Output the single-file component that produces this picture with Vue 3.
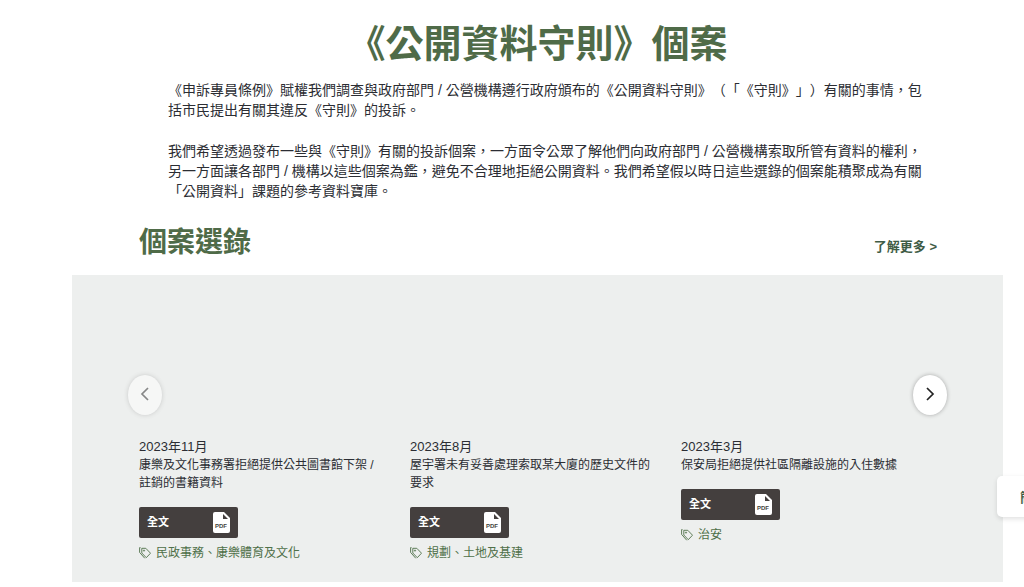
<script setup>
const cases = [
  { date: '2023年11月', title: '康樂及文化事務署拒絕提供公共圖書館下架 / 註銷的書籍資料', tag: '民政事務、康樂體育及文化' },
  { date: '2023年8月', title: '屋宇署未有妥善處理索取某大廈的歷史文件的要求', tag: '規劃、土地及基建' },
  { date: '2023年3月', title: '保安局拒絕提供社區隔離設施的入住數據', tag: '治安' }
]
</script>

<template>
  <main class="page">
    <h1>《公開資料守則》個案</h1>
    <div class="intro">
      <p>《申訴專員條例》賦權我們調查與政府部門 / 公營機構遵行政府頒布的《公開資料守則》（「《守則》」）有關的事情，包<br>括市民提出有關其違反《守則》的投訴。</p>
      <p>我們希望透過發布一些與《守則》有關的投訴個案，一方面令公眾了解他們向政府部門 / 公營機構索取所管有資料的權利，<br>另一方面讓各部門 / 機構以這些個案為鑑，避免不合理地拒絕公開資料。我們希望假以時日這些選錄的個案能積聚成為有關<br>「公開資料」課題的參考資料寶庫。</p>
    </div>
    <header class="section-head">
      <h2>個案選錄</h2>
      <a class="more" href="#">了解更多 &gt;</a>
    </header>
    <section class="panel">
      <button class="arrow prev" type="button" aria-label="上一頁" disabled>
        <svg viewBox="0 0 18 18"><path d="M12 3 6 9l6 6" /></svg>
      </button>
      <button class="arrow next" type="button" aria-label="下一頁">
        <svg viewBox="0 0 18 18"><path d="m6 3 6 6-6 6" /></svg>
      </button>
      <div class="cards">
        <article v-for="item in cases" :key="item.date" class="card">
          <time>{{ item.date }}</time>
          <h3>{{ item.title }}</h3>
          <a class="full" href="#">
            <span>全文</span>
            <svg class="pdf" viewBox="0 0 17 21">
              <path class="sheet" d="M2 0h9l6 6v13a2 2 0 0 1-2 2H2a2 2 0 0 1-2-2V2a2 2 0 0 1 2-2z" />
              <path class="fold" d="M10 2v5h5z" />
              <text x="8" y="16" text-anchor="middle">PDF</text>
            </svg>
          </a>
          <a class="tag" href="#">
            <svg viewBox="0 0 12 12">
              <path d="M2.800 1.300h4l4.700 4.900-4.200 4.500L2.800 6z" />
              <path d="M1.500 0.600H0.600V5.400l5.200 5.900" />
              <circle cx="5" cy="3.600" r="0.600" />
            </svg>
            <span>{{ item.tag }}</span>
          </a>
        </article>
      </div>
    </section>
    <button class="side" type="button">簡</button>
  </main>
</template>

<style>
body {
  margin: 0;
  background: #fff;
  overflow-x: hidden;
}
</style>

<style scoped>
.page {
  position: relative;
  overflow: hidden;
  padding: 16px 21px 5px 72px;
  color: #2b2d33;
  font-family: "Liberation Sans", "Noto Sans CJK TC", sans-serif;
  text-spacing-trim: space-all;
}
h1, h2, h3, p {
  margin: 0;
}
h1 {
  font-size: 38px;
  line-height: 56px;
  font-weight: 700;
  color: #4f6b48;
  text-align: center;
}
.intro {
  display: flex;
  flex-direction: column;
  gap: 21px;
  margin: 8px 24px 0 96px;
  font-size: 14px;
  line-height: 20px;
}
.intro p {
  white-space: nowrap;
}
.section-head {
  display: flex;
  justify-content: space-between;
  align-items: center;
  margin: 22px 66px 12px 67px;
}
h2 {
  font-size: 28px;
  line-height: 40px;
  color: #4f6b48;
}
.more {
  margin-top: 8px;
  font-size: 13px;
  line-height: 20px;
  font-weight: 700;
  color: #3f5c46;
  text-decoration: none;
}
.panel {
  position: relative;
  padding: 163px 66px 20px 67px;
  background: #edefee;
}
.cards {
  display: grid;
  grid-template-columns: repeat(3, 1fr);
  gap: 15px;
}
.card {
  display: flex;
  flex-direction: column;
  align-items: flex-start;
}
time {
  font-size: 13px;
  line-height: 18px;
}
h3 {
  padding-right: 12px;
  font-size: 12px;
  line-height: 18px;
  font-weight: 400;
}
.full {
  display: flex;
  align-items: center;
  justify-content: space-between;
  box-sizing: border-box;
  width: 99px;
  height: 31px;
  margin-top: 15px;
  padding: 0 8px;
  border-radius: 2px;
  background: #443f3e;
  color: #fff;
  font-size: 11px;
  font-weight: 700;
  text-decoration: none;
}
.full span {
  padding-bottom: 3px;
}
.pdf {
  width: 17px;
  height: 21px;
}
.sheet {
  fill: #fff;
}
.fold {
  fill: #443f3e;
}
.pdf text {
  fill: #443f3e;
  font-size: 6px;
  font-weight: 700;
}
.tag {
  display: flex;
  align-items: center;
  gap: 5px;
  margin-top: 6px;
  font-size: 12px;
  line-height: 18px;
  color: #4f7049;
  text-decoration: none;
}
.tag svg {
  width: 12px;
  height: 12px;
  fill: none;
  stroke: currentColor;
  stroke-width: 0.9;
}
.arrow {
  position: absolute;
  top: 100px;
  display: grid;
  place-items: center;
  width: 34px;
  height: 40px;
  padding: 0 0 2px;
  border: 0;
  border-radius: 50%;
  background: #fff;
  box-shadow: 0 0 4px rgba(0, 0, 0, 0.3);
}
.arrow svg {
  width: 18px;
  height: 18px;
  fill: none;
  stroke: #222;
  stroke-width: 1.7;
}
.prev {
  left: 56px;
  opacity: 0.5;
}
.next {
  right: 56px;
}
.side {
  position: absolute;
  top: 476px;
  right: -20px;
  width: 47px;
  height: 41px;
  padding: 0 0 0 23px;
  border: 0;
  border-radius: 5px;
  background: #fff;
  box-shadow: 0 2px 5px rgba(0, 0, 0, 0.12);
  color: #3f5c46;
  font-family: inherit;
  font-size: 13px;
  font-weight: 700;
  text-align: left;
}
</style>
